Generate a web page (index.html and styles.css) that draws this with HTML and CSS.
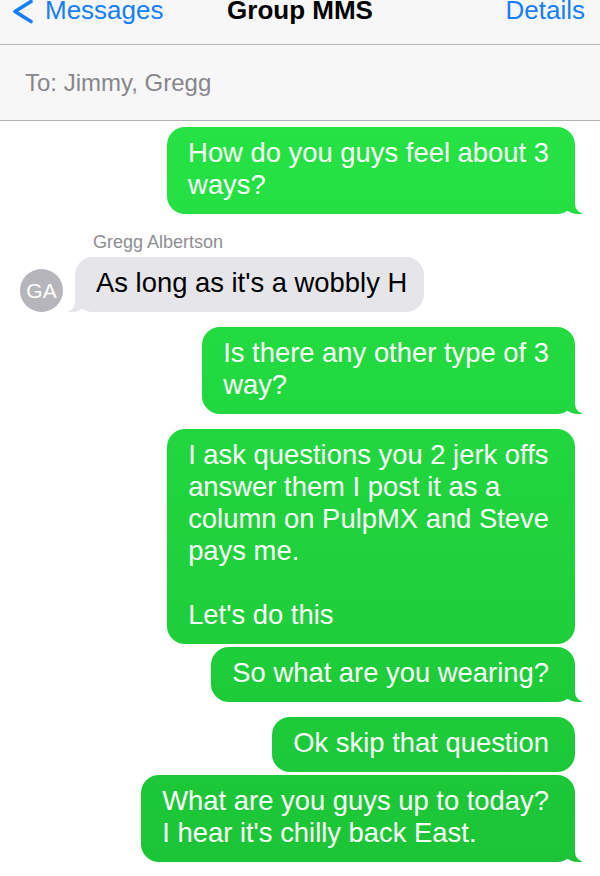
FILE: index.html
```html
<!DOCTYPE html>
<html lang="en">
<head>
  <meta charset="UTF-8">
  <meta name="viewport" content="width=device-width, initial-scale=1.0">
  <title>Group MMS</title>
  <link rel="stylesheet" href="styles.css">
</head>
<body>
  <div class="nav">
    <a class="back" href="#">
      <svg width="22" height="26" viewBox="0 0 22 26"><path d="M19 2.5 L3 12.5 L19 22.5" fill="none" stroke="#157efb" stroke-width="3.6" stroke-linecap="round" stroke-linejoin="round"/></svg>
      <span>Messages</span>
    </a>
    <div class="title">Group MMS</div>
    <a class="details" href="#">Details</a>
  </div>

  <div class="to-row">To: Jimmy, Gregg</div>

  <div class="thread">
    <div class="msg out tail">How do you guys feel about 3<br>ways?</div>

    <div class="sender">Gregg Albertson</div>
    <div class="incoming">
      <div class="avatar">GA</div>
      <div class="msg in tail">As long as it's a wobbly H</div>
    </div>

    <div class="msg out tail gap">Is there any other type of 3<br>way?</div>
    <div class="msg out gap">I ask questions you 2 jerk offs<br>answer them I post it as a<br>column on PulpMX and Steve<br>pays me.<br><br>Let's do this</div>
    <div class="msg out tail near">So what are you wearing?</div>
    <div class="msg out gap">Ok skip that question</div>
    <div class="msg out tail near">What are you guys up to today?<br>I hear it's chilly back East.</div>
  </div>
</body>
</html>
```

FILE: styles.css
```css
body {
  font-family: "Liberation Sans", Arial, sans-serif;
  background-color: #fff;
  margin: 0;
  width: 600px;
  height: 876px;
  overflow: hidden;
}

.nav {
  display: grid;
  grid-template-columns: 1fr auto 1fr;
  align-items: start;
  height: 44px;
  background: #f7f7f7;
  border-bottom: 1px solid #b4b4b4;
  font-size: 26px;
  line-height: 20px;
}

.back {
  display: flex;
  align-items: flex-start;
  gap: 11px;
  padding-left: 12px;
  color: #157efb;
  text-decoration: none;
}

.back svg {
  margin-top: -1px;
}

.title {
  color: #000;
  font-weight: 700;
}

.details {
  justify-self: end;
  padding-right: 15px;
  color: #157efb;
  text-decoration: none;
}

.to-row {
  display: flex;
  align-items: center;
  height: 75px;
  padding-left: 25px;
  background: #f7f7f7;
  border-bottom: 1px solid #b4b4b4;
  color: #86868b;
  font-size: 24px;
}

.thread {
  display: flex;
  flex-direction: column;
  padding: 6px 25px 0 20px;
}

.msg {
  position: relative;
  padding: 10px 21px 13px 21px;
  border-radius: 18px;
  font-size: 27.4px;
  line-height: 32px;
}

.msg.out {
  align-self: flex-end;
  padding-right: 26px;
  color: #fff;
  background: linear-gradient(to bottom, #27e846 0, #1bc436 876px) fixed;
}

.msg.gap {
  margin-top: 15px;
}

.msg.near {
  margin-top: 3px;
}

.msg.in {
  padding-right: 17px;
  color: #000;
  background: #e5e5ea;
}

/* bubble tails */
.msg.tail::before,
.msg.tail::after {
  content: "";
  position: absolute;
  bottom: 0;
  height: 22px;
}

.msg.out.tail::before {
  right: -7px;
  width: 20px;
  background: inherit;
  border-bottom-left-radius: 16px 14px;
}

.msg.out.tail::after {
  right: -26px;
  width: 26px;
  background: #fff;
  border-bottom-left-radius: 10px;
}

.msg.in.tail::before {
  left: -7px;
  width: 20px;
  background: #e5e5ea;
  border-bottom-right-radius: 16px 14px;
}

.msg.in.tail::after {
  left: -26px;
  width: 26px;
  background: #fff;
  border-bottom-right-radius: 10px;
}

.sender {
  margin: 18px 0 5px 73px;
  color: #8e8e93;
  font-size: 18px;
  line-height: 20px;
}

.incoming {
  display: flex;
  align-items: flex-end;
  gap: 12px;
}

.avatar {
  position: relative;
  z-index: 1;
  display: flex;
  align-items: center;
  justify-content: center;
  width: 43px;
  height: 43px;
  border-radius: 50%;
  background: #b5b5bb;
  color: #fff;
  font-size: 21px;
}
```
